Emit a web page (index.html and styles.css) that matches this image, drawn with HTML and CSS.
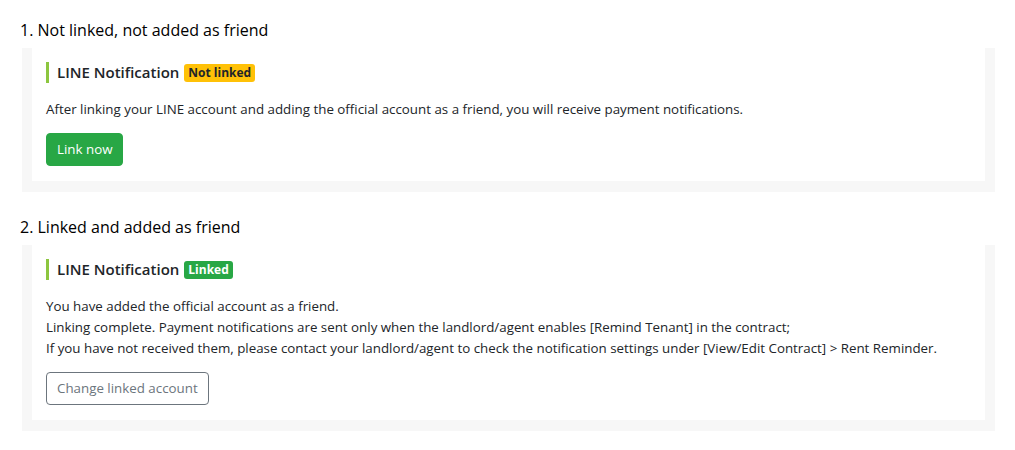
FILE: index.html
```html
<!DOCTYPE html>
<html lang="en">
  <head>
    <meta charset="UTF-8" />
    <meta name="viewport" content="width=device-width, initial-scale=1.0" />
    <title>LINE notification states</title>
    <link rel="stylesheet" href="styles.css">
  </head>
  <body>
    <main class="page">
      <section class="case">
        <h3 class="case-title">1. Not linked, not added as friend</h3>
        <div class="panel">
          <div class="card">
            <h4 class="card-title">
              LINE Notification
              <span class="badge badge-warning">Not linked</span>
            </h4>
            <p>
              After linking your LINE account and adding the official account as a friend, you will receive payment notifications.
            </p>
            <button class="btn btn-success">Link now</button>
          </div>
        </div>
      </section>

      <section class="case">
        <h3 class="case-title">2. Linked and added as friend</h3>
        <div class="panel">
          <div class="card">
            <h4 class="card-title">
              LINE Notification
              <span class="badge badge-success">Linked</span>
            </h4>
            <p>
              You have added the official account as a friend.<br>
              Linking complete. Payment notifications are sent only when the landlord/agent enables [Remind Tenant] in the contract;<br>
              If you have not received them, please contact your landlord/agent to check the notification settings under [View/Edit Contract] &gt; Rent Reminder.
            </p>
            <button class="btn btn-outline">Change linked account</button>
          </div>
        </div>
      </section>
    </main>
  </body>
</html>
```

FILE: styles.css
```css
html {
  font-family: "Open Sans", "Noto Sans", sans-serif;
  font-size: 13.33px;
  line-height: 1.6;
  color: #212529;
}
body {
  margin: 0;
  background: #fff;
}
.page {
  padding: 18px 20px 0;
}
.case {
  margin-bottom: 23px;
}
.case-title {
  font-size: 16px;
  font-weight: 400;
  line-height: 25px;
  color: #000;
  margin: 0 0 5px;
}
/*****************************************
    PANEL + CARD
*****************************************/
.panel {
  margin-left: 2px;
  padding: 0 10px 11px;
  background-color: #f7f7f7;
}
.card {
  background-color: #fff;
  padding: 14px 14px 15px;
}
.card-title {
  display: flex;
  align-items: center;
  gap: 5px;
  margin: 0 0 16px;
  padding-left: 8px;
  border-left: 3px solid #8cc63f;
  font-size: 15px;
  font-weight: 600;
  line-height: 21px;
}
.card p {
  margin: 0 0 13px;
  line-height: 21px;
}
/************************
  BADGES
************************/
.badge {
  display: inline-block;
  padding: 0 4px;
  border-radius: 3px;
  font-size: 12px;
  font-weight: 700;
  line-height: 18px;
}
.badge-warning {
  background-color: #ffc107;
  color: #212529;
}
.badge-success {
  background-color: #28a745;
  color: #fff;
}
/************************
  BUTTONS
************************/
.btn {
  display: inline-block;
  font-family: inherit;
  font-size: 13.33px;
  line-height: 19px;
  padding: 6px 10px;
  border: 1px solid transparent;
  border-radius: 4px;
  cursor: pointer;
}
.btn-success {
  background-color: #28a745;
  border-color: #28a745;
  color: #fff;
}
.btn-outline {
  background-color: #fff;
  border-color: #6c757d;
  color: #6c757d;
}
```
